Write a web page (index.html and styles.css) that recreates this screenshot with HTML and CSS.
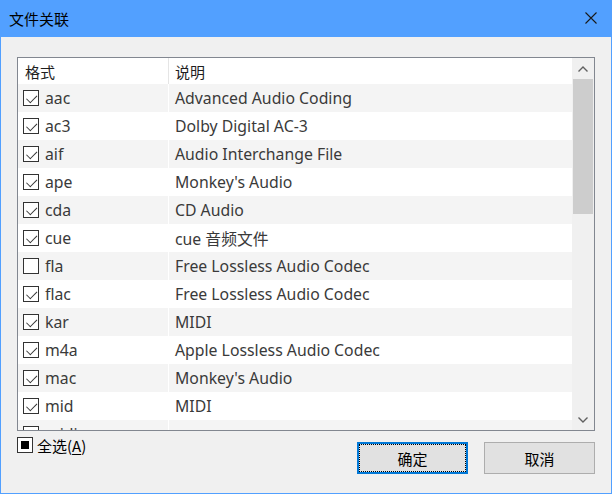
FILE: index.html
```html
<!DOCTYPE html>
<html lang="zh">
<head>
<meta charset="utf-8">
<title>文件关联</title>
<link rel="stylesheet" href="styles.css">
</head>
<body>
<div class="window">
  <div class="titlebar">
    <span class="title">文件关联</span>
    <svg class="close" width="12" height="12" viewBox="0 0 12 12"><path d="M0.5 0.5 L11.5 11.5 M11.5 0.5 L0.5 11.5" stroke="#1a1a1a" stroke-width="1.1" fill="none"/></svg>
  </div>
  <div class="content">
    <div class="list">
      <div class="rows">
        <div class="row header">
          <div class="cell c1"><span class="htext">格式</span></div>
          <div class="cell c2">说明</div>
        </div>
        <div class="row odd"><div class="cell c1"><span class="cb on"></span>aac</div><div class="cell c2">Advanced Audio Coding</div></div>
        <div class="row"><div class="cell c1"><span class="cb on"></span>ac3</div><div class="cell c2">Dolby Digital AC-3</div></div>
        <div class="row odd"><div class="cell c1"><span class="cb on"></span>aif</div><div class="cell c2">Audio Interchange File</div></div>
        <div class="row"><div class="cell c1"><span class="cb on"></span>ape</div><div class="cell c2">Monkey's Audio</div></div>
        <div class="row odd"><div class="cell c1"><span class="cb on"></span>cda</div><div class="cell c2">CD Audio</div></div>
        <div class="row"><div class="cell c1"><span class="cb on"></span>cue</div><div class="cell c2">cue 音频文件</div></div>
        <div class="row odd"><div class="cell c1"><span class="cb"></span>fla</div><div class="cell c2">Free Lossless Audio Codec</div></div>
        <div class="row"><div class="cell c1"><span class="cb on"></span>flac</div><div class="cell c2">Free Lossless Audio Codec</div></div>
        <div class="row odd"><div class="cell c1"><span class="cb on"></span>kar</div><div class="cell c2">MIDI</div></div>
        <div class="row"><div class="cell c1"><span class="cb on"></span>m4a</div><div class="cell c2">Apple Lossless Audio Codec</div></div>
        <div class="row odd"><div class="cell c1"><span class="cb on"></span>mac</div><div class="cell c2">Monkey's Audio</div></div>
        <div class="row"><div class="cell c1"><span class="cb on"></span>mid</div><div class="cell c2">MIDI</div></div>
        <div class="row odd partial"><div class="cell c1"><span class="cb"></span>midi</div><div class="cell c2"></div></div>
      </div>
      <div class="scrollbar">
        <div class="arrow">
          <svg width="10" height="6" viewBox="0 0 10 6"><path d="M0.5 5.5 L5 1 L9.5 5.5" stroke="#606060" stroke-width="1.4" fill="none"/></svg>
        </div>
        <div class="track"><div class="thumb"></div></div>
        <div class="arrow">
          <svg width="10" height="6" viewBox="0 0 10 6"><path d="M0.5 0.5 L5 5 L9.5 0.5" stroke="#606060" stroke-width="1.4" fill="none"/></svg>
        </div>
      </div>
    </div>
    <div class="footer">
      <label class="selectall"><span class="cb mixed"></span>全选(<u>A</u>)</label>
      <div class="buttons">
        <button class="btn default"><span class="focus">确定</span></button>
        <button class="btn">取消</button>
      </div>
    </div>
  </div>
</div>
</body>
</html>
```

FILE: styles.css
```css
* { box-sizing: border-box; }
html, body { margin: 0; padding: 0; }
body {
  width: 612px;
  height: 494px;
  overflow: hidden;
  font-family: "Noto Sans", "Noto Sans CJK SC", sans-serif;
  font-size: 15px;
  background: #f0f0f0;
}
.window {
  width: 612px;
  height: 494px;
  border: 1px solid #52a0ff;
  border-top: none;
  background: #f0f0f0;
  display: flex;
  flex-direction: column;
}
.titlebar {
  height: 37px;
  background: #52a0ff;
  margin: 0 -1px;
  display: flex;
  align-items: center;
  justify-content: space-between;
  padding: 0 15px 0 9px;
  flex: none;
}
.title {
  font-family: "Noto Sans CJK SC", sans-serif;
  font-size: 15px;
  color: #000;
  line-height: 1;
  padding-bottom: 1px;
}
.close { display: block; margin-top: -1px; }
.content {
  padding: 20px 15px 0 16px;
}
.list {
  width: 578px;
  height: 374px;
  border: 1px solid #828790;
  background: #fff;
  display: flex;
  overflow: hidden;
}
.rows {
  flex: 1;
  height: 372px;
  overflow: hidden;
}
.row {
  display: flex;
  height: 28px;
  color: #3a3a3a;
  font-size: 15.8px;
}
.row.partial { overflow: hidden; }
.row.odd .cell { background: #f4f4f4; }
.row .c1 { border-right: 1px solid #fff; }
.row.header { height: 26px; color: #1e1e1e; font-size: 15px; }
.row.header .cell { background: #fff; }
.row.header .c1 { border-right: 1px solid #e5e5e5; }
.cell {
  display: flex;
  align-items: center;
  white-space: nowrap;
}
.c1 {
  width: 151px;
  padding-left: 5px;
}
.c2 {
  flex: 1;
  padding-left: 6px;
}
.htext { padding-left: 2px; }
.cb {
  width: 16px;
  height: 16px;
  border: 1px solid #333;
  background: #fff;
  margin-right: 6px;
  flex: none;
  position: relative;
  display: inline-block;
}
.cb.on::after {
  content: "";
  position: absolute;
  width: 5px;
  height: 9px;
  border-right: 1.3px solid #333;
  border-bottom: 1.3px solid #333;
  transform: rotate(45deg) translate(1px, 0);
  transform-origin: center;
  left: 4px;
  top: 1px;
}
.cb.mixed::after {
  content: "";
  position: absolute;
  left: 3px;
  top: 3px;
  width: 8px;
  height: 8px;
  background: #000;
}
.scrollbar {
  width: 22px;
  flex: none;
  background: #f0f0f0;
  display: flex;
  flex-direction: column;
}
.arrow {
  height: 21px;
  display: flex;
  align-items: center;
  justify-content: center;
  flex: none;
}
.arrow svg { display: block; }
.track {
  flex: 1;
  padding: 0 1px;
}
.thumb {
  height: 135px;
  background: #cdcdcd;
}
.footer {
  display: flex;
  justify-content: space-between;
  align-items: flex-start;
  width: 578px;
}
.selectall {
  margin-top: 6px;
  display: flex;
  align-items: center;
  font-family: "Noto Sans CJK SC", sans-serif;
  font-size: 15px;
  color: #000;
  height: 16px;
}
.selectall .cb { margin-right: 4px; border-color: #333; }
.selectall u { text-decoration-thickness: 1px; text-underline-offset: 2px; }
.buttons {
  margin-top: 11px;
  display: flex;
  gap: 16px;
}
.btn {
  width: 111px;
  height: 32px;
  background: #e1e1e1;
  border: 1px solid #adadad;
  font-family: "Noto Sans CJK SC", sans-serif;
  font-size: 15px;
  color: #000;
  padding: 0;
  display: flex;
  align-items: center;
  justify-content: center;
}
.btn.default {
  width: 111px;
  border: 2px solid #0078d7;
  padding: 0;
}
.btn .focus {
  width: 100%;
  height: 100%;
  display: flex;
  align-items: center;
  justify-content: center;
  border: 1px dotted #000;
}
```
